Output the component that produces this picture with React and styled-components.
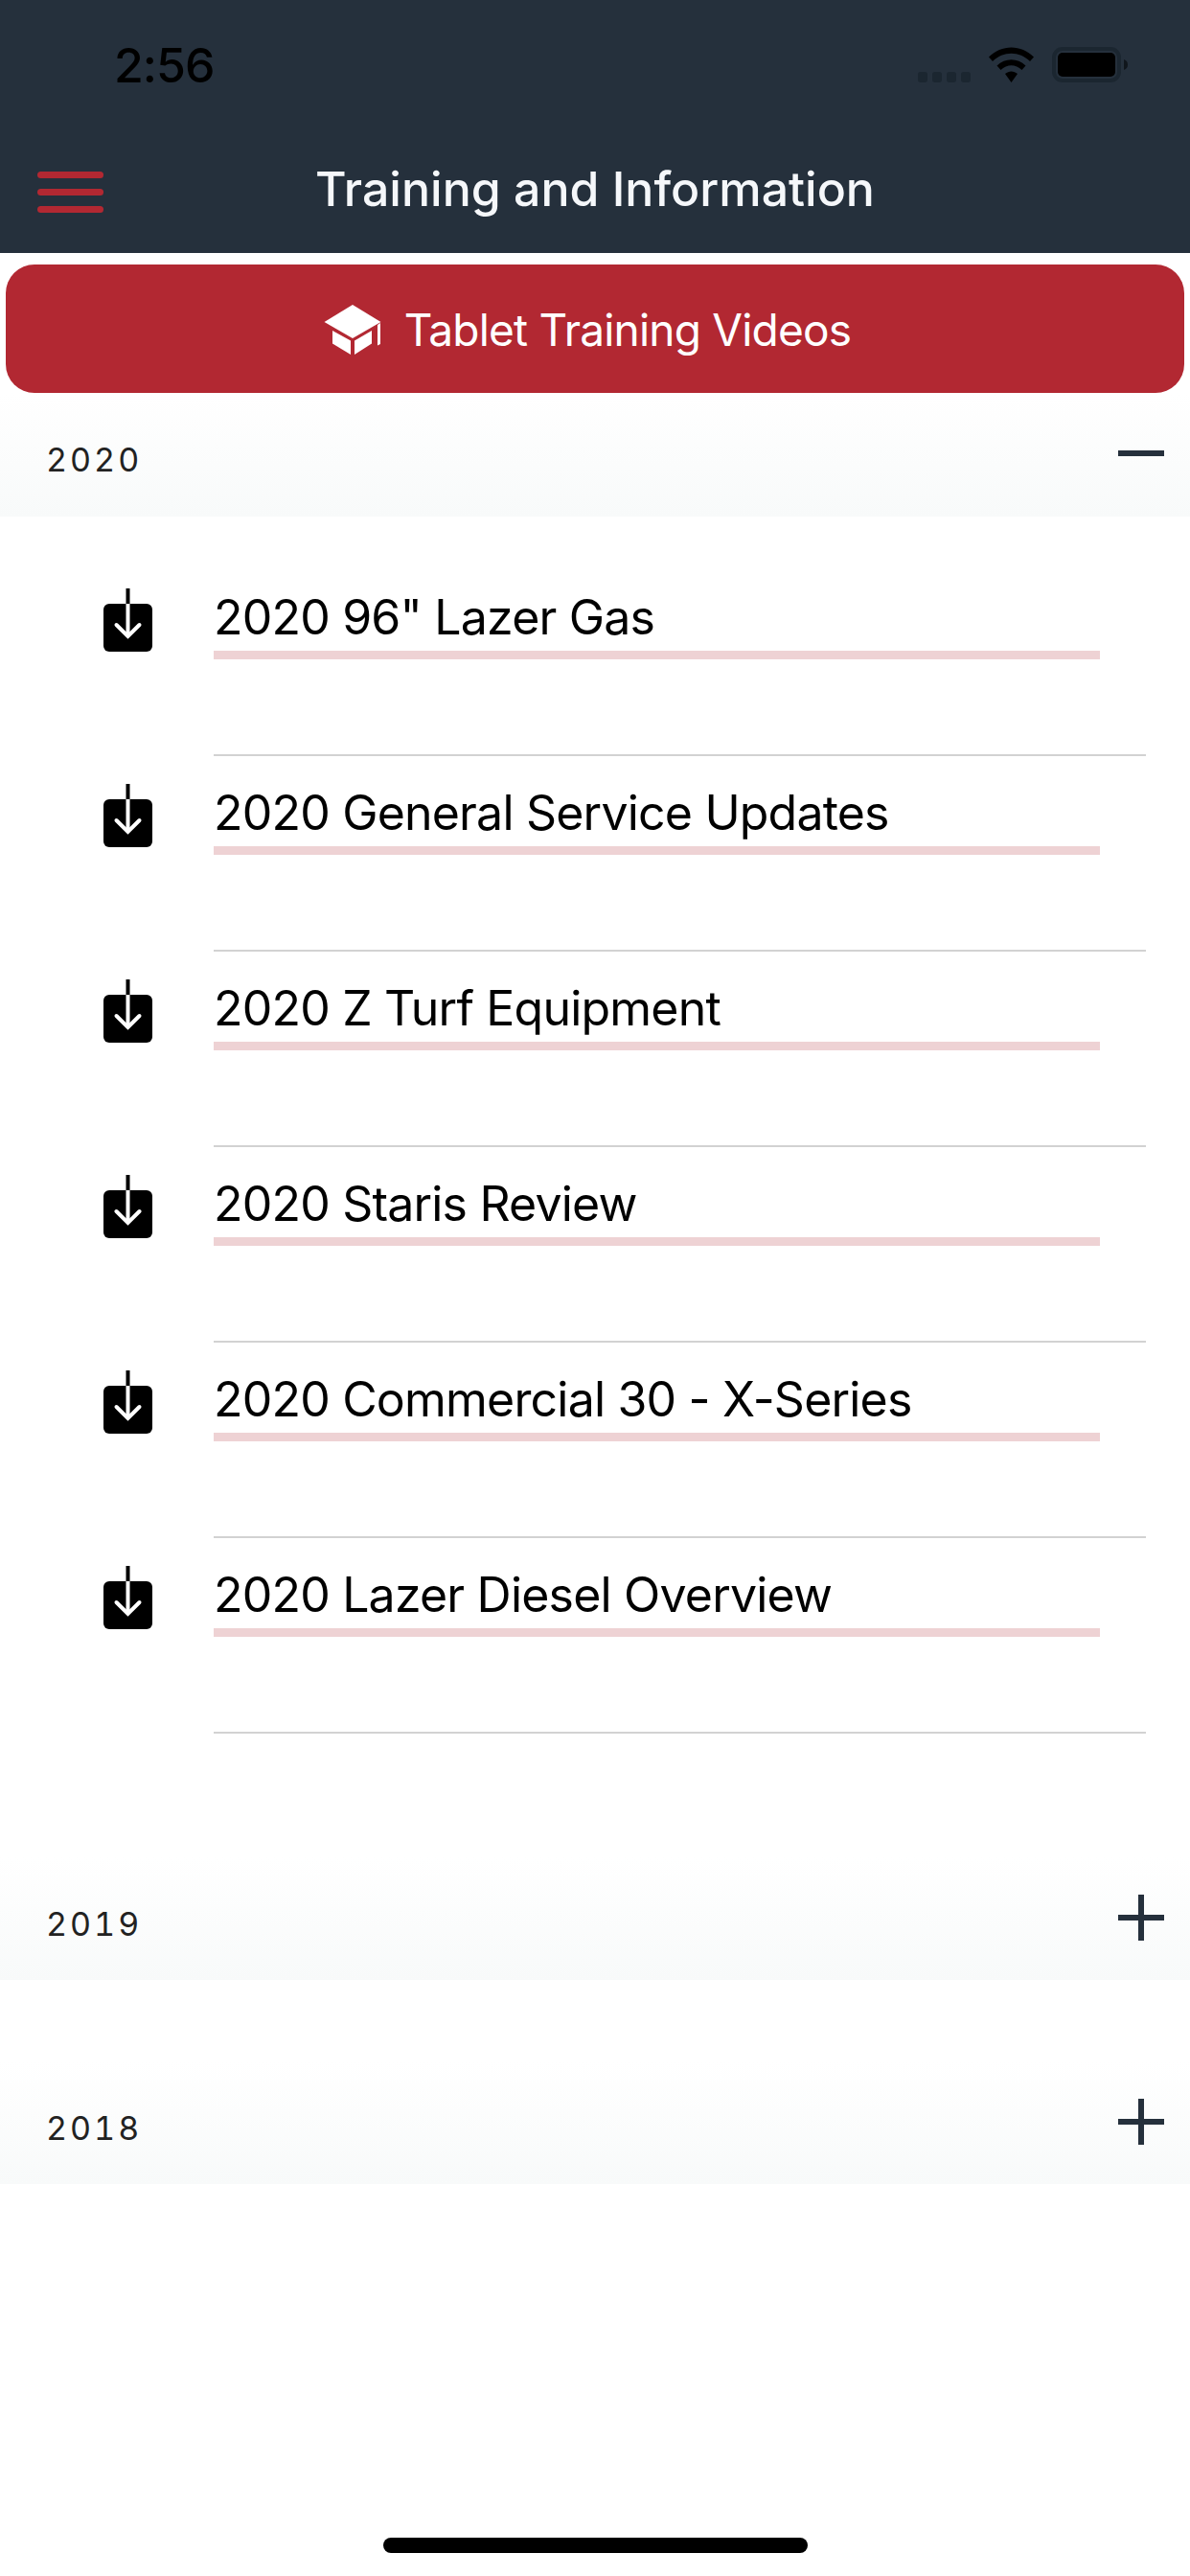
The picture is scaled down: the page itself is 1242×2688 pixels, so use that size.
import styled, { createGlobalStyle } from "styled-components";

const GlobalStyle = createGlobalStyle`
  * { box-sizing: border-box; }
  html, body { margin: 0; padding: 0; background: #fff; }
  body { font-family: Inter, "Noto Sans", sans-serif; }
`;

const Page = styled.div`
  width: 1242px;
  height: 2688px;
  display: flex;
  flex-direction: column;
  background: #fff;
  overflow: hidden;
`;

const Header = styled.header`
  height: 264px;
  flex-shrink: 0;
  background: #25303c;
  display: flex;
  flex-direction: column;
`;

const StatusBar = styled.div`
  height: 132px;
  padding: 0 65px 0 119px;
  display: flex;
  align-items: flex-start;
  justify-content: space-between;
`;

const Time = styled.span`
  margin-top: 40px;
  font-size: 50px;
  line-height: 56px;
  font-weight: 500;
  letter-spacing: -1px;
  color: #000;
`;

const StatusIcons = styled.div`
  margin-top: 49px;
  height: 37px;
  display: flex;
  align-items: flex-start;
`;

const SignalDots = styled.div`
  display: flex;
  gap: 5px;
  margin: 26px 19px 0 0;
`;

const SignalDot = styled.span`
  width: 10px;
  height: 11px;
  border-radius: 3px;
  background: #1b2630;
`;

const WifiIcon = styled.svg`
  width: 47px;
  height: 37px;
  margin-right: 19px;
`;

const BatteryIcon = styled.svg`
  width: 79px;
  height: 37px;
`;

const NavBar = styled.div`
  flex: 1;
  display: grid;
  grid-template-columns: 1fr auto 1fr;
  align-items: start;
`;

const Burger = styled.div`
  margin: 47px 0 0 39px;
  width: 69px;
  display: flex;
  flex-direction: column;
  gap: 11px;
`;

const BurgerBar = styled.span`
  height: 7px;
  border-radius: 4px;
  background: #b22832;
`;

const Title = styled.h1`
  margin: 35px 0 0 0;
  font-size: 50px;
  line-height: 60px;
  font-weight: 500;
  color: #f5f7fa;
`;

const VideosButton = styled.button`
  flex-shrink: 0;
  height: 134px;
  margin: 12px 6px 0 6px;
  padding: 2px 16px 0 0;
  border: none;
  border-radius: 30px;
  background: #b22832;
  color: #fff;
  display: flex;
  align-items: center;
  justify-content: center;
  gap: 24px;
  font-family: inherit;
  font-size: 46px;
  letter-spacing: -0.8px;
  font-weight: 400;
`;

const CapIcon = styled.svg`
  width: 60px;
  height: 52px;
  fill: #fff;
`;

const SectionHead = styled.div`
  height: ${(p) => p.$height}px;
  flex-shrink: 0;
  margin-top: ${(p) => p.$gap}px;
  padding: 0 27px 0 48px;
  background: linear-gradient(to bottom, #ffffff 0%, #f8fafa 100%);
  display: flex;
  justify-content: space-between;
`;

const SectionLabel = styled.span`
  margin-top: 51px;
  font-size: 34px;
  line-height: 38px;
  letter-spacing: 3px;
  font-variant-numeric: tabular-nums;
  color: #222;
`;

const ToggleIcon = styled.svg`
  width: 48px;
  height: 48px;
  margin-top: 39px;
  stroke: #25303c;
  stroke-width: 6;
`;

const FileList = styled.ul`
  list-style: none;
  margin: 0;
  padding: 46px 0 0 0;
`;

const FileRow = styled.li`
  height: 204px;
  display: flex;
  align-items: flex-start;
`;

const DownloadIcon = styled.svg`
  width: 51px;
  height: 66px;
  margin: 29px 0 0 108px;
  flex-shrink: 0;
`;

const RowBody = styled.div`
  flex: 1;
  margin: 0 46px 0 64px;
  height: 204px;
  border-bottom: 2px solid #d2d2d2;
  padding-top: 29px;
`;

const RowLink = styled.a`
  display: block;
  width: 925px;
  height: 74px;
  border-bottom: 9px solid #eed2d4;
  font-size: 50px;
  line-height: 60px;
  letter-spacing: -0.8px;
  color: #000;
`;

const HomeBar = styled.div`
  width: 443px;
  height: 16px;
  margin: auto auto 24px auto;
  border-radius: 8px;
  background: #000;
`;

const files = [
  '2020 96" Lazer Gas',
  "2020 General Service Updates",
  "2020 Z Turf Equipment",
  "2020 Staris Review",
  "2020 Commercial 30 - X-Series",
  "2020 Lazer Diesel Overview",
];

function Toggle({ open }) {
  return (
    <ToggleIcon viewBox="0 0 48 48">
      <path d="M0 24H48" />
      {!open && <path d="M24 0V48" />}
    </ToggleIcon>
  );
}

function Section({ year, open, gap, height = 128, children }) {
  return (
    <>
      <SectionHead $gap={gap} $height={height}>
        <SectionLabel>{year}</SectionLabel>
        <Toggle open={open} />
      </SectionHead>
      {children}
    </>
  );
}

export default function App() {
  return (
    <Page>
      <GlobalStyle />
      <Header>
        <StatusBar>
          <Time>2:56</Time>
          <StatusIcons>
            <SignalDots>
              <SignalDot />
              <SignalDot />
              <SignalDot />
              <SignalDot />
            </SignalDots>
            <WifiIcon viewBox="0 0 47 37">
              <path d="M0 10.5C13-3 34-3 47 10.5L43 15C32 4 15 4 4 15Z" />
              <path d="M8.5 19.5C17 11 30 11 38.5 19.5L34.5 24C28 17.5 19 17.5 12.5 24Z" />
              <path d="M17 28C21 24.5 26 24.5 30 28L23.5 37Z" />
            </WifiIcon>
            <BatteryIcon viewBox="0 0 79 37">
              <rect x="2" y="2" width="68" height="33" rx="9" fill="none" stroke="#1b2630" strokeWidth="4" />
              <rect x="6" y="6" width="60" height="25" rx="5" fill="#000" />
              <path d="M75 13C78 14 79 16 79 18.5C79 21 78 23 75 24Z" fill="#10161c" />
            </BatteryIcon>
          </StatusIcons>
        </StatusBar>
        <NavBar>
          <Burger>
            <BurgerBar />
            <BurgerBar />
            <BurgerBar />
          </Burger>
          <Title>Training and Information</Title>
        </NavBar>
      </Header>

      <VideosButton>
        <CapIcon viewBox="0 0 60 52">
          <path d="M30 0L59.5 18L30 35L0.5 18Z" />
          <path d="M9 27L28 37.5V52L9 40.5Z" />
          <path d="M32 37.5L50 27V40.5L32 52Z" />
          <path d="M56 21L59 19V41L56 42.5Z" />
        </CapIcon>
        Tablet Training Videos
      </VideosButton>

      <Section year="2020" open gap={0} height={129}>
        <FileList>
          {files.map((name) => (
            <FileRow key={name}>
              <DownloadIcon viewBox="0 0 51 66">
                <rect y="16" width="51" height="50" rx="6" fill="#000" />
                <path d="M25.5 0V16" stroke="#000" strokeWidth="4" strokeLinecap="round" />
                <path d="M25.5 16V50" stroke="#fff" strokeWidth="4" />
                <path d="M13.5 38L25.5 50L37.5 38" fill="none" stroke="#fff" strokeWidth="4" strokeLinecap="round" />
              </DownloadIcon>
              <RowBody>
                <RowLink>{name}</RowLink>
              </RowBody>
            </FileRow>
          ))}
        </FileList>
      </Section>
      <Section year="2019" gap={129} />
      <Section year="2018" gap={85} />

      <HomeBar />
    </Page>
  );
}
